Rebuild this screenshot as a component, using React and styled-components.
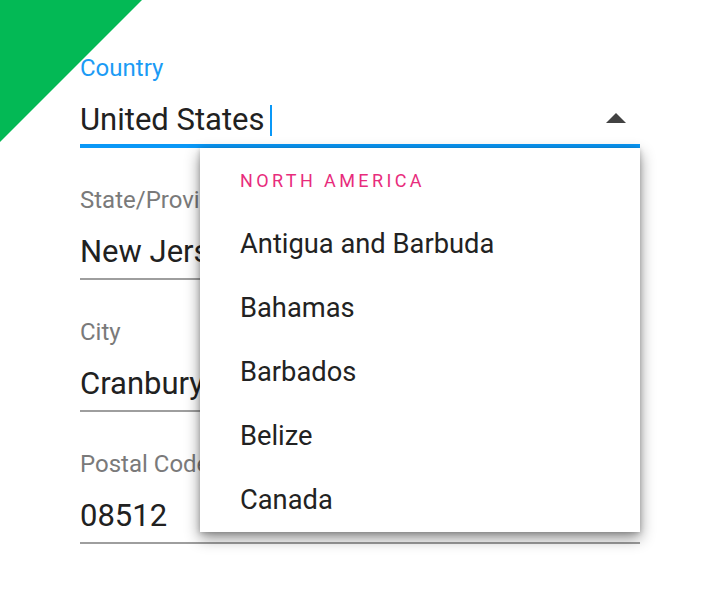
import React from 'react'
import styled, { createGlobalStyle } from 'styled-components';

const GlobalStyle = createGlobalStyle`
    html, body {
        margin: 0;
        padding: 0;
        background: #ffffff;
    }
    body {
        font-family: Roboto, "Noto Sans", sans-serif;
        color: #212121;
    }
`;

const fields = [
    { label: 'Country', value: 'United States', focused: true },
    { label: 'State/Province', value: 'New Jersey' },
    { label: 'City', value: 'Cranbury' },
    { label: 'Postal Code', value: '08512' },
];

const countries = ['Antigua and Barbuda', 'Bahamas', 'Barbados', 'Belize', 'Canada'];

function App() {
    return (
        <PageStyled>
            <GlobalStyle />
            <Corner />
            <Form>
                {fields.map((f) => (
                    <Field key={f.label} $focused={f.focused}>
                        <Label $focused={f.focused}>{f.label}</Label>
                        <ValueRow>
                            <Value>
                                {f.value}
                                {f.focused && <Caret />}
                            </Value>
                            {f.focused && <ArrowUp />}
                        </ValueRow>
                        {f.focused && (
                            <Menu>
                                <GroupTitle>North America</GroupTitle>
                                {countries.map((c) => (
                                    <Option key={c}>{c}</Option>
                                ))}
                            </Menu>
                        )}
                    </Field>
                ))}
            </Form>
        </PageStyled>
    )
}

const PageStyled = styled.div`
    position: relative;
    width: 720px;
    height: 592px;
    overflow: hidden;
    background: #fff;
`;

const Corner = styled.div`
    position: absolute;
    top: 0;
    left: 0;
    width: 142px;
    height: 142px;
    background: #03b955;
    clip-path: polygon(0 0, 100% 0, 0 100%);
`;

const Form = styled.div`
    position: relative;
    display: flex;
    flex-direction: column;
    width: 560px;
    padding: 16px 0 0 80px;
`;

const Field = styled.div`
    position: relative;
    box-sizing: border-box;
    height: 132px;
    padding-top: 38px;
    border-bottom: ${(p) => (p.$focused ? '4px solid #0a98f7' : '2px solid #9e9e9e')};
    z-index: ${(p) => (p.$focused ? 2 : 1)};
`;

const Label = styled.div`
    font-size: 24px;
    line-height: 28px;
    color: ${(p) => (p.$focused ? '#1b9bf5' : '#7a7a7a')};
`;

const ValueRow = styled.div`
    display: flex;
    align-items: center;
    justify-content: space-between;
    margin-top: 20px;
`;

const Value = styled.div`
    display: flex;
    align-items: center;
    font-size: 31px;
    line-height: 36px;
    color: #212121;
    white-space: nowrap;
`;

const Caret = styled.span`
    display: inline-block;
    width: 2px;
    height: 31px;
    margin-left: 5px;
    background: #0a98f7;
`;

const ArrowUp = styled.span`
    width: 0;
    height: 0;
    margin: 0 14px 4px 0;
    border-left: 10px solid transparent;
    border-right: 10px solid transparent;
    border-bottom: 10px solid #424242;
`;

const Menu = styled.div`
    position: absolute;
    top: 132px;
    left: 120px;
    width: 440px;
    background: #fff;
    box-shadow: 0 6px 14px rgba(0, 0, 0, 0.45), 0 1px 5px rgba(0, 0, 0, 0.2);
`;

const GroupTitle = styled.div`
    box-sizing: border-box;
    height: 64px;
    padding: 2px 0 0 40px;
    font-size: 18px;
    line-height: 62px;
    letter-spacing: 3.4px;
    text-transform: uppercase;
    color: #e82c7c;
`;

const Option = styled.div`
    padding-left: 40px;
    font-size: 27.3px;
    line-height: 64px;
    color: #222;
`;

export default App;
